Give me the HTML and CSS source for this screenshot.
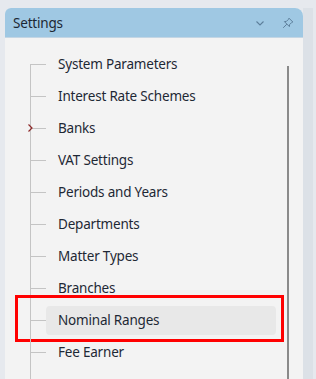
FILE: index.html
```html
<!DOCTYPE html>
<html lang="en">
<head>
    <meta charset="UTF-8">
    <meta name="viewport" content="width=device-width, initial-scale=1.0">
    <title>Settings</title>
    <link rel="stylesheet" href="styles.css">
</head>
<body>
    <div class="frame">
        <div class="panel">
            <div class="panel-header">
                <span class="panel-title">Settings</span>
                <div class="panel-tools">
                    <svg class="tool" width="10" height="8" viewBox="0 0 10 8">
                        <polyline points="1.5,2.5 5,6 8.5,2.5" fill="none" stroke="#5d7f9b" stroke-width="1.1"/>
                    </svg>
                    <svg class="tool" width="12" height="12" viewBox="0 0 12 12">
                        <path d="M7 1.2 L10.8 5 L9.6 5.6 L7.6 7.6 L7.4 9.6 L2.4 4.6 L4.4 4.4 L6.4 2.4 Z M4.9 7.1 L1.2 10.8"
                              fill="none" stroke="#5d7f9b" stroke-width="1" stroke-linejoin="round"/>
                    </svg>
                </div>
            </div>
            <div class="panel-body">
                <ul class="tree">
                    <li class="node first"><span class="branch"></span><span class="label">System Parameters</span></li>
                    <li class="node"><span class="branch"></span><span class="label">Interest Rate Schemes</span></li>
                    <li class="node">
                        <span class="branch">
                            <svg class="expander" width="7" height="10" viewBox="0 0 7 10">
                                <polyline points="1.5,1.5 5,5 1.5,8.5" fill="none" stroke="#8e2a2a" stroke-width="1.2"/>
                            </svg>
                        </span>
                        <span class="label">Banks</span>
                    </li>
                    <li class="node"><span class="branch"></span><span class="label">VAT Settings</span></li>
                    <li class="node"><span class="branch"></span><span class="label">Periods and Years</span></li>
                    <li class="node"><span class="branch"></span><span class="label">Departments</span></li>
                    <li class="node"><span class="branch"></span><span class="label">Matter Types</span></li>
                    <li class="node"><span class="branch"></span><span class="label">Branches</span></li>
                    <li class="node selected"><span class="branch"></span><span class="label">Nominal Ranges</span></li>
                    <li class="node"><span class="branch"></span><span class="label">Fee Earner</span></li>
                    <li class="node"><span class="branch"></span><span class="label">&nbsp;</span></li>
                </ul>
                <div class="scrollbar"></div>
            </div>
        </div>
        <div class="gutter"></div>
    </div>
</body>
</html>
```

FILE: styles.css
```css
html, body {
    margin: 0;
    height: 100%;
    overflow: hidden;
}
body {
    font-family: "Noto Sans", "Segoe UI", sans-serif;
    font-size: 13.5px;
    letter-spacing: -0.2px;
    color: #1e2835;
    background-color: #e6e9ee;
}
.frame {
    display: flex;
    height: 100%;
    padding: 8px 0 0 5px;
    box-sizing: border-box;
}
.panel {
    width: 298px;
    display: flex;
    flex-direction: column;
    background-color: #f3f3f3;
    border-radius: 6px 8px 0 0;
    overflow: hidden;
}
.gutter {
    width: 10px;
    background-color: #dce1e7;
}
.panel-header {
    height: 29px;
    flex: none;
    display: flex;
    align-items: center;
    justify-content: space-between;
    padding: 0 9px 0 8px;
    background-color: #9fc8e3;
    border-bottom: 1px solid #c4d6e4;
}
.panel-title {
    color: #1c2733;
}
.panel-tools {
    display: flex;
    align-items: center;
    gap: 17px;
}
.panel-body {
    flex: 1;
    display: flex;
    padding-top: 10px;
    overflow: hidden;
}
.tree {
    list-style: none;
    margin: 0;
    padding: 0;
    width: 271px;
}
.node {
    position: relative;
    display: flex;
    align-items: center;
    height: 32px;
    padding-left: 25px;
}
.branch {
    position: relative;
    width: 16px;
    height: 100%;
    background:
        linear-gradient(#c4c4c4, #c4c4c4) 1px 50% / 15px 1px no-repeat,
        linear-gradient(#c4c4c4, #c4c4c4) 0 0 / 1px 100% no-repeat;
}
.first .branch {
    background:
        linear-gradient(#c4c4c4, #c4c4c4) 1px 50% / 15px 1px no-repeat,
        linear-gradient(#c4c4c4, #c4c4c4) 0 16px / 1px 100% no-repeat;
}
.expander {
    position: absolute;
    left: -3px;
    top: 11px;
}
.label {
    flex: 1;
    height: 29px;
    line-height: 28px;
    padding-left: 12px;
    border-radius: 4px;
    white-space: nowrap;
}
.selected .label {
    background-color: #e8e8e8;
}
.selected::after {
    content: "";
    position: absolute;
    top: -9px;
    left: 10px;
    right: -8px;
    bottom: -6px;
    border: 3px solid #ff0000;
}
.scrollbar {
    width: 2px;
    margin: 18px 0 0 11px;
    background-color: #8a8a8a;
}
```
